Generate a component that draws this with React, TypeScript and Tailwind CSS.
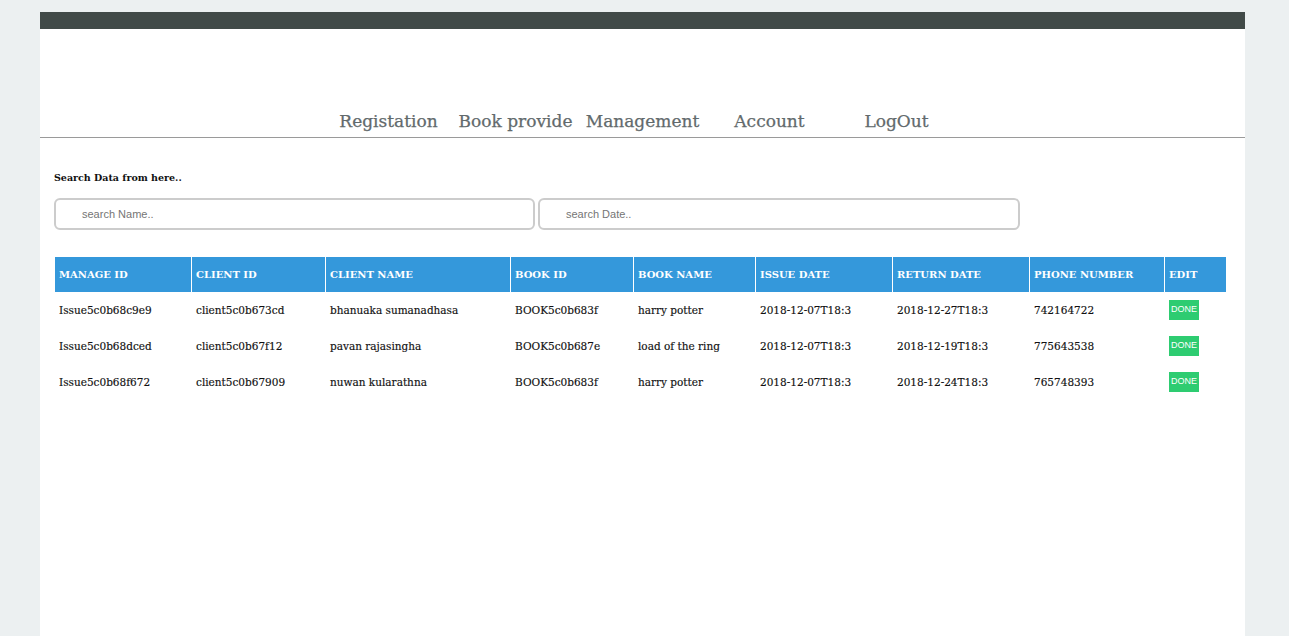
import React from "react";

const rows = [
  ["Issue5c0b68c9e9", "client5c0b673cd", "bhanuaka sumanadhasa", "BOOK5c0b683f", "harry potter", "2018-12-07T18:3", "2018-12-27T18:3", "742164722"],
  ["Issue5c0b68dced", "client5c0b67f12", "pavan rajasingha", "BOOK5c0b687e", "load of the ring", "2018-12-07T18:3", "2018-12-19T18:3", "775643538"],
  ["Issue5c0b68f672", "client5c0b67909", "nuwan kularathna", "BOOK5c0b683f", "harry potter", "2018-12-07T18:3", "2018-12-24T18:3", "765748393"],
];

const headers = ["Manage ID", "Client ID", "Client Name", "Book ID", "Book Name", "Issue Date", "Return Date", "Phone Number", "Edit"];

const navItems = ["Registation", "Book provide", "Management", "Account", "LogOut"];

const gridCols = "grid grid-cols-[136px_133px_184px_122px_121px_136px_136px_134px_61px] gap-x-px";

export default function App() {
  return (
    <div className="min-h-screen bg-[#ecf0f1] pt-3 font-['DejaVu_Serif',serif]">
      <div className="ml-10 w-[1205px] min-h-[624px] bg-white">
        <div className="h-[17px] bg-[#414a48]" />
        <nav className="flex h-[109px] items-end justify-center border-b border-[#9a9a9a] pb-[6px]">
          {navItems.map((n) => (
            <a key={n} className="w-[127px] text-center text-[17px] leading-[20px] text-[#626a6c] [-webkit-text-stroke:0.25px]">
              {n}
            </a>
          ))}
        </nav>
        <div className="pl-[14px]">
          <p className="mt-[34px] text-[9.5px] font-bold leading-[12px] text-[#111]">Search Data from here..</p>
          <div className="mt-[14px] flex gap-[3px]">
            <input
              className="h-[32px] w-[481px] rounded-[6px] border-2 border-[#cccccc] pl-[26px] font-['Liberation_Sans',Arial,sans-serif] text-[11px] outline-none placeholder:text-[#757575]"
              placeholder="search Name.."
            />
            <input
              className="h-[32px] w-[482px] rounded-[6px] border-2 border-[#cccccc] pl-[26px] font-['Liberation_Sans',Arial,sans-serif] text-[11px] outline-none placeholder:text-[#757575]"
              placeholder="search Date.."
            />
          </div>
          <div className="ml-px mt-[27px] w-[1171px]">
            <div className={gridCols}>
              {headers.map((h) => (
                <div key={h} className="flex h-[35px] items-center bg-[#3498db] pl-1 text-[10px] font-bold uppercase text-white">
                  {h}
                </div>
              ))}
            </div>
            {rows.map((r, i) => (
              <div key={i} className={gridCols}>
                {r.map((c, j) => (
                  <div key={j} className="flex h-[36px] items-center pl-1 pt-[2px] text-[10.5px] text-[#111] [-webkit-text-stroke:0.15px]">
                    {c}
                  </div>
                ))}
                <div className="flex h-[36px] items-center pl-1">
                  <button className="flex h-[20px] w-[30px] items-center justify-center bg-[#2ecc71] font-['Liberation_Sans',Arial,sans-serif] text-[9px] text-white">
                    DONE
                  </button>
                </div>
              </div>
            ))}
          </div>
        </div>
      </div>
    </div>
  );
}
